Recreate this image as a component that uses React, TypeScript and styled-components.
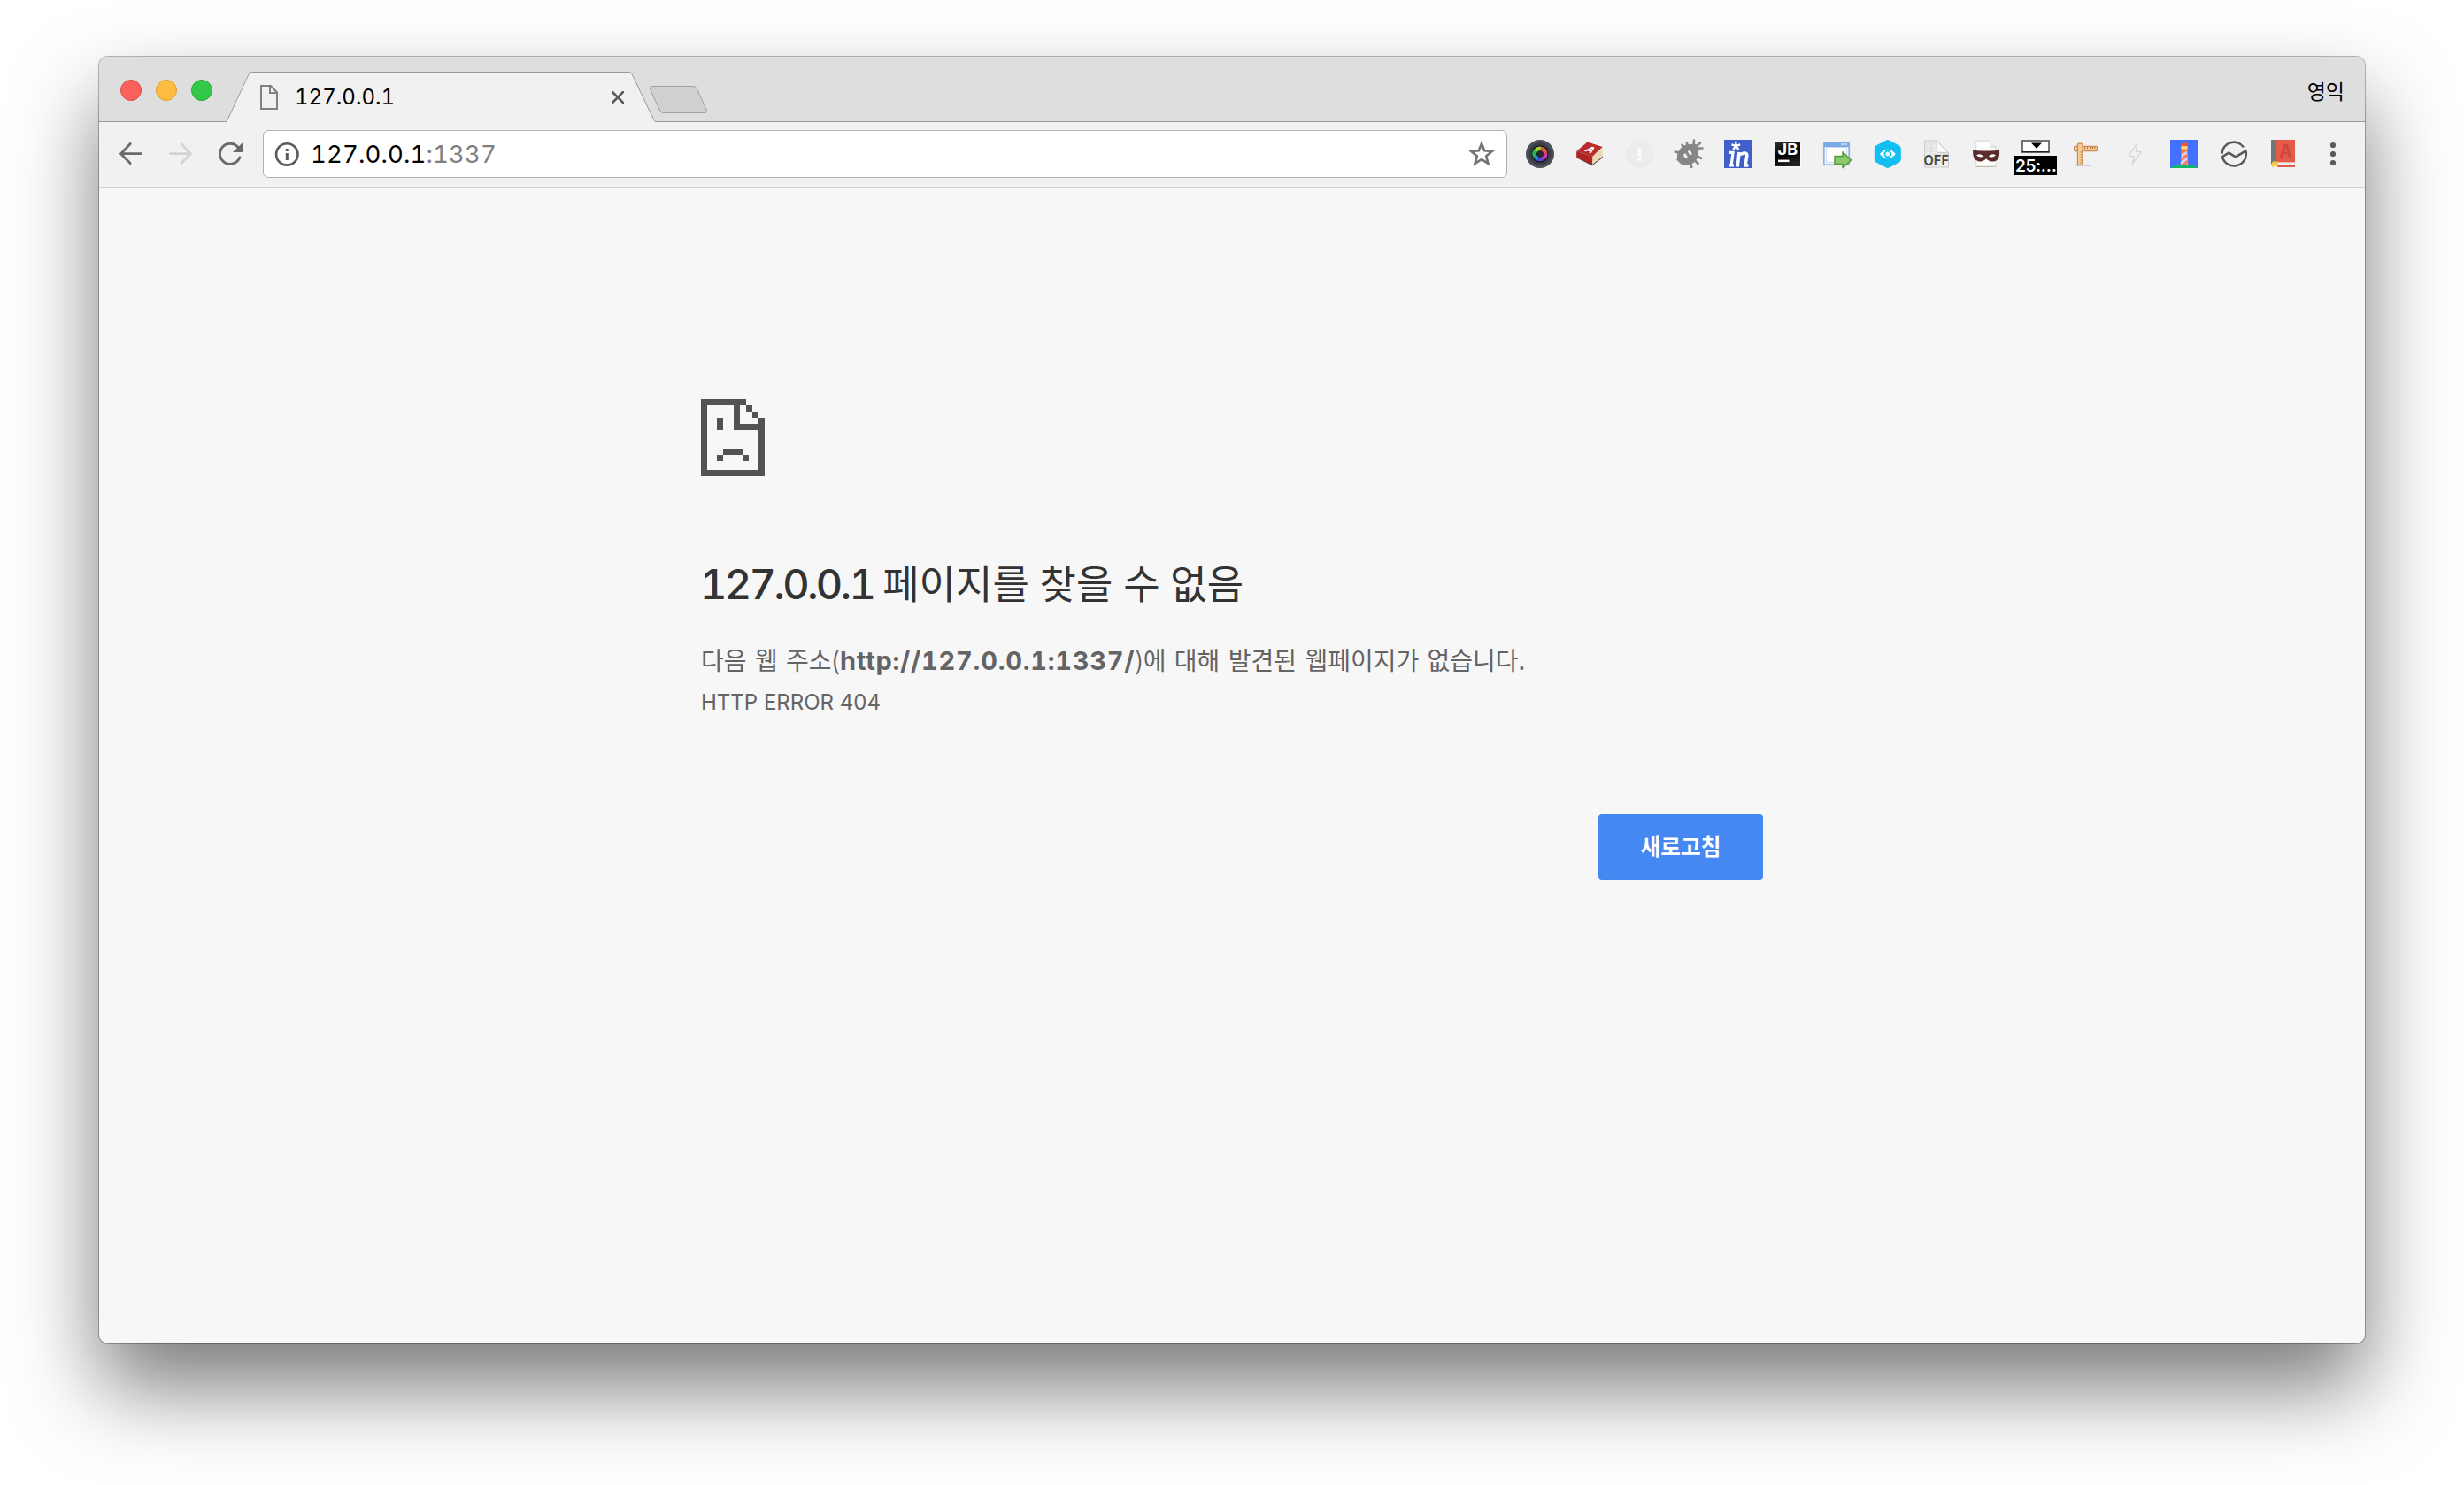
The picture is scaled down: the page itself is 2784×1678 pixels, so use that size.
import React from "react";
import styled, { createGlobalStyle } from "styled-components";

const LATIN = `Inter, "Noto Sans CJK KR", sans-serif`;
const KOREAN = `"Noto Sans CJK KR", Inter, sans-serif`;

const GlobalStyle = createGlobalStyle`
  body { margin: 0; background: #fff; font-family: ${LATIN}; }
  *, *::before, *::after { box-sizing: border-box; }
`;

const Desktop = styled.div`
  width: 2784px;
  height: 1678px;
  padding: 64px 112px 0;
  overflow: hidden;
  background: #fff;
`;

const BrowserWindow = styled.div`
  display: flex;
  flex-direction: column;
  height: 1454px;
  border-radius: 10px;
  background: #f7f7f7;
  box-shadow: 0 0 0 1px rgba(0, 0, 0, 0.27), 0 50px 96px rgba(0, 0, 0, 0.52);
`;

const TabStrip = styled.header`
  display: flex;
  height: 74px;
  padding: 17px 23px 0 24px;
  border-bottom: 1px solid #999;
  border-radius: 10px 10px 0 0;
  background: #dedede;
`;

const TrafficLights = styled.div`
  display: flex;
  gap: 16px;
  margin-top: 9px;
  width: 119px;
`;

const Light = styled.span<{ $fill: string; $edge: string }>`
  width: 24px;
  height: 24px;
  border-radius: 50%;
  border: 1px solid ${(p) => p.$edge};
  background: ${(p) => p.$fill};
`;

const Tab = styled.div`
  position: relative;
  display: flex;
  align-items: center;
  width: 486px;
  height: 57px;
  padding: 0 36px 0 39px;
`;

const TabShape = styled.svg`
  position: absolute;
  inset: 0;
`;

const TabIcon = styled.svg`
  position: relative;
  width: 20px;
  height: 28px;
`;

const TabTitle = styled.span`
  position: relative;
  flex: 1;
  margin-left: 19px;
  font-size: 24px;
  font-variant-numeric: tabular-nums;
  line-height: 30px;
  letter-spacing: 0.05px;
  color: #000;
`;

const CloseIcon = styled.svg`
  position: relative;
  width: 14px;
  height: 14px;
`;

const NewTab = styled.svg`
  width: 68px;
  height: 33px;
  margin: 15px 0 0 -8px;
`;

const Profile = styled.span`
  margin: 3px 0 0 auto;
  font-family: ${KOREAN};
  font-size: 23px;
  line-height: 36px;
  color: #000;
`;

const Toolbar = styled.nav`
  display: flex;
  align-items: center;
  height: 74px;
  padding: 9px 20px 10px;
  border-bottom: 1px solid #d2d2d2;
  background: #f1f1f1;
`;

const NavButtons = styled.div`
  display: flex;
  gap: 24px;
`;

const Icon = styled.svg`
  display: block;
  width: 32px;
  height: 32px;
  flex: none;
  overflow: visible;
`;

const Omnibox = styled.div`
  display: flex;
  align-items: center;
  width: 1406px;
  height: 54px;
  margin: 0 21px;
  padding: 0 12px 0 10px;
  border: 1px solid #b1b1b1;
  border-radius: 6px;
  background: #fff;
`;

const Address = styled.span`
  flex: 1;
  margin-left: 11px;
  font-size: 27.5px;
  font-variant-numeric: tabular-nums;
  line-height: 36px;
  letter-spacing: 0.15px;
  color: #000;
`;

const Port = styled.span`
  color: #808080;
`;

const Extensions = styled.div`
  display: flex;
  gap: 24px;
`;

const TimerSlot = styled.div`
  position: relative;
`;

const TimerBadge = styled.span`
  position: absolute;
  left: -8px;
  top: 18px;
  width: 48px;
  height: 22px;
  padding-left: 1px;
  background: #000;
  color: #fff;
  font-size: 19px;
  font-weight: 600;
  line-height: 23px;
  letter-spacing: -0.4px;
  white-space: nowrap;
`;

const Page = styled.main`
  display: flex;
  flex-direction: column;
  width: 1200px;
  margin: 0 auto;
  padding-top: 239px;
`;

const SadPage = styled.svg`
  width: 72px;
  height: 87px;
`;

const Heading = styled.h1`
  margin: 92px 0 0 -1px;
  height: 60px;
  font-size: 47px;
  font-variant-numeric: tabular-nums;
  font-weight: 500;
  line-height: 60px;
  letter-spacing: -2.7px;
  color: #333;
  white-space: nowrap;
`;

const HeadingKorean = styled.span`
  font-family: ${KOREAN};
  font-size: 45px;
  font-weight: 400;
  letter-spacing: 0;
  word-spacing: 1.7px;
  line-height: 1;
`;

const Summary = styled.p`
  margin: 32px 0 0;
  height: 46px;
  font-family: ${KOREAN};
  font-size: 28px;
  line-height: 46px;
  word-spacing: 3.1px;
  color: #646464;
  white-space: nowrap;
`;

const Url = styled.strong`
  font-family: ${LATIN};
  font-size: 29px;
  font-variant-numeric: tabular-nums;
  font-weight: 700;
  letter-spacing: 0.75px;
  line-height: 1;
`;

const ErrorCode = styled.div`
  margin-top: 8px;
  font-size: 24px;
  line-height: 36px;
  color: #646464;
`;

const ReloadButton = styled.button`
  align-self: flex-end;
  width: 186px;
  height: 74px;
  margin-top: 108px;
  padding: 0 0 5px;
  border: 0;
  border-radius: 4px;
  background: #4688f1;
  color: #fff;
  font-family: ${KOREAN};
  font-size: 24.7px;
  font-weight: 700;
`;

const LensIcon = () => (
  <Icon viewBox="0 0 32 32">
    <circle cx="16" cy="16" r="16" fill="#4b5058" />
    <circle cx="16" cy="16" r="12.5" fill="#3a3d43" />
    <circle cx="16" cy="16" r="9.5" fill="#08080c" />
    <g fill="none" strokeWidth="4.8">
      <path d="M10.6 19 A6 6 0 0 1 11.5 11.8" stroke="#2fae5c" />
      <path d="M11.5 11.8 A6 6 0 0 1 17.2 10" stroke="#a5cf3a" />
      <path d="M17.2 10 A6 6 0 0 1 22 15" stroke="#e0563a" />
      <path d="M22 15 A6 6 0 0 1 19 21.2" stroke="#d32fae" />
      <path d="M19 21.2 A6 6 0 0 1 13.5 21.4" stroke="#5b47e0" />
      <path d="M13.5 21.4 A6 6 0 0 1 10.6 19" stroke="#1f8fd0" />
    </g>
    <circle cx="16.5" cy="16" r="3.4" fill="#26282c" />
  </Icon>
);

const RedDictionaryIcon = () => (
  <Icon viewBox="0 0 32 32">
    <path d="M1.5 20.5 L19 29.2 L31 20 L31 18 L19.5 27 Z" fill="#444" />
    <path d="M13.5 2.5 L30.7 8 L19.6 18.8 L1.2 13 Z" fill="#bb2a2a" />
    <path d="M1.2 13 L19.6 18.8 L19.2 28 L1.2 20.2 Z" fill="#ad2223" />
    <path d="M19.6 18.8 L30.7 8 L30.7 19 L19.2 28 Z" fill="#ead9b6" />
    <text
      transform="matrix(0.85 0.3 -0.75 0.62 9.6 12.4)"
      fontFamily="Inter, sans-serif"
      fontWeight="800"
      fontSize="12.5"
      fill="#fff"
    >
      A
    </text>
  </Icon>
);

const StopIcon = () => (
  <Icon viewBox="0 0 32 32">
    <path
      d="M10.5 1.8 H22 L31 10.5 V21.5 L22 30.5 H10.5 L2 21.5 V10.5 Z"
      fill="#ececec"
      stroke="#e8e8e8"
      strokeLinejoin="round"
    />
    <rect x="14.2" y="9.5" width="4.4" height="9" rx="1" fill="#fbfbfb" />
    <rect x="14.2" y="20" width="4.4" height="3.6" rx="1" fill="#fbfbfb" />
  </Icon>
);

const BugIcon = () => (
  <Icon viewBox="0 0 32 32">
    <path
      d="M14 3.5 L14.5 8 M22 0.5 L21.5 8 M31.5 9.5 H25 M0.8 13.5 L6.5 15 M8.5 5.5 L11 9.5 M30 20.8 L25 18.5 M26.6 27 L22 22.5 M19.3 31 L18 25 M3.6 22.5 L7 21 M29 3.5 L24 8"
      stroke="#868686"
      strokeWidth="2.6"
      strokeLinecap="round"
      fill="none"
    />
    <ellipse cx="15" cy="17" rx="13" ry="11" transform="rotate(-45 15 17)" fill="#868686" />
    <circle cx="21.5" cy="10.5" r="6" fill="#868686" />
    <path d="M11.8 17.2 L13 19.2 M16.8 13.4 L18 15.6" stroke="#f1f1f1" strokeWidth="3.2" strokeLinecap="round" />
  </Icon>
);

const StarInIcon = () => (
  <Icon viewBox="0 0 32 32">
    <rect width="32" height="32" fill="#4060c9" />
    <path
      d="M13.3 6.8 V1.8 M13.3 6.8 L18.2 5.4 M13.3 6.8 L16.4 11 M13.3 6.8 L10.2 11 M13.3 6.8 L8.4 5.4"
      stroke="#fff"
      strokeWidth="2.3"
    />
    <path d="M6 14.4 H10 L8.2 28.4 M5 29 H11" stroke="#fff" strokeWidth="3.2" fill="none" />
    <path
      d="M15.2 30.5 L17 14 M17 17 Q26 12.6 25.8 18 L24 29 H27.5"
      stroke="#fff"
      strokeWidth="3.5"
      fill="none"
    />
  </Icon>
);

const JetBrainsIcon = () => (
  <Icon viewBox="0 0 32 32">
    <defs>
      <linearGradient id="jb" x1="0" y1="0" x2="0.3" y2="1">
        <stop offset="0" stopColor="#333" />
        <stop offset="0.6" stopColor="#000" />
        <stop offset="1" stopColor="#222" />
      </linearGradient>
    </defs>
    <rect x="1" y="1" width="30" height="30" fill="#fafafa" />
    <rect x="2" y="2" width="28" height="28" fill="url(#jb)" />
    <text
      x="4.6"
      y="17.4"
      fontFamily="Inter, sans-serif"
      fontWeight="700"
      fontSize="17"
      fill="#fff"
      textLength="22.5"
      lengthAdjust="spacingAndGlyphs"
    >
      JB
    </text>
    <rect x="5" y="22.6" width="12.5" height="2.5" fill="#fff" />
  </Icon>
);

const WindowArrowIcon = () => (
  <Icon viewBox="0 0 32 32">
    <rect x="0.8" y="2.8" width="28.4" height="25.4" rx="1.6" fill="#fdfdff" stroke="#8fb2e3" strokeWidth="1.8" />
    <rect x="1" y="3" width="28" height="5" fill="#7babe6" />
    <rect x="20" y="4" width="7" height="2.2" fill="#b9d2f3" />
    <rect x="3.4" y="8.5" width="23.2" height="17" fill="#fff" stroke="#c7d8f1" />
    <path
      d="M13 18.6 H22 V13.8 L31.5 23 L22 31.6 V27.4 H13 Z"
      fill="#8bc96c"
      stroke="#4f9c33"
      strokeWidth="1.5"
      strokeLinejoin="round"
    />
  </Icon>
);

const HexEyeIcon = () => (
  <Icon viewBox="0 0 32 32">
    <path
      d="M14.6 0.8 Q16.8 -0.6 19 0.8 L30 6.4 Q31.8 7.6 31.8 10 V22 Q31.8 24.4 30 25.6 L19 31.2 Q16.8 32.6 14.6 31.2 L3.6 25.6 Q1.8 24.4 1.8 22 V10 Q1.8 7.6 3.6 6.4 Z"
      fill="#12bff0"
    />
    <path d="M7.8 16 Q16.8 5.6 25.8 16 Q16.8 26.4 7.8 16 Z" fill="#fff" />
    <circle cx="16.8" cy="16" r="4.4" fill="#12bff0" />
    <circle cx="16.8" cy="16" r="2.5" fill="#d9f5fd" />
  </Icon>
);

const OffPageIcon = () => (
  <Icon viewBox="0 0 32 32">
    <path d="M2.5 1 H16 L29.5 15 V31 H2.5 Z" fill="#ececec" stroke="#c9c9c9" />
    <path d="M4 5 H14 M4 9 H14 M4 13 H20 M12 16.5 H28" stroke="#dadada" strokeWidth="1.2" />
    <path d="M10 1.2 V31" stroke="#d8d8d8" />
    <path d="M16 1 L16.5 14 L29.5 15 Z" fill="#fafafa" stroke="#c4c4c4" />
    <text
      x="1.6"
      y="29.4"
      fontFamily="Inter, sans-serif"
      fontWeight="600"
      fontSize="16"
      fill="#444"
      textLength="28.5"
      lengthAdjust="spacingAndGlyphs"
    >
      OFF
    </text>
  </Icon>
);

const MaskIcon = () => (
  <Icon viewBox="0 0 32 32">
    <path d="M4.8 1.2 H20.5 L27 8 V30.4 H4.8 Z" fill="#fdfdfd" stroke="#d6d6d6" />
    <path d="M20.5 1.2 V8 H27" fill="#eee" stroke="#ccc" />
    <path d="M4.8 30.4 H27" stroke="#b5c5a4" strokeWidth="1.2" />
    <path
      d="M1 11.6 Q8 13 16 12.4 Q24 13 31 11.6 Q32.2 24 24 24.6 Q19 24.6 16.2 21.2 Q13 24.6 8 24.6 Q0.6 24 1 11.6 Z"
      fill="#5b2c2e"
    />
    <path d="M5 17.6 Q9.6 14.4 13.4 18.8 Q8.6 20.6 5 17.6 Z M27 17.6 Q22.6 14.4 18.8 18.8 Q23.6 20.6 27 17.6 Z" fill="#fff" />
  </Icon>
);

const TimerIcon = () => (
  <TimerSlot>
    <Icon viewBox="0 0 32 32">
      <rect x="1" y="1" width="30" height="13" fill="#fff" stroke="#666" strokeWidth="1.8" />
      <path d="M0.5 13.6 H31.5" stroke="#222" strokeWidth="1.2" />
      <path d="M11 3.5 H23 L17 9.8 Z" fill="#000" />
    </Icon>
    <TimerBadge>25:…</TimerBadge>
  </TimerSlot>
);

const RulerIcon = () => (
  <Icon viewBox="0 0 32 32">
    <path d="M4 29.2 H22" stroke="#cfcfcf" strokeWidth="1.8" />
    <rect x="3.6" y="7.4" width="26" height="5.2" rx="1" fill="#f5cb9b" stroke="#cf8c50" strokeWidth="1.2" />
    <rect x="7.4" y="4.2" width="5.6" height="24.2" rx="1" fill="#f5cb9b" stroke="#cf8c50" strokeWidth="1.2" />
    <path
      d="M15.5 8 V10 M18.5 8 V10 M21.5 8 V10 M24.5 8 V10 M27 8 V10 M10.6 14 H12.6 M10.6 17 H12.6 M10.6 20 H12.6 M10.6 23 H12.6 M10.6 26 H12.6"
      stroke="#a8662c"
      strokeWidth="0.9"
    />
  </Icon>
);

const BoltIcon = () => (
  <Icon viewBox="0 0 32 32">
    <path
      d="M18.4 4.4 L9.2 18 L15 18.6 L13.4 27.4 L23.2 13.6 L17.4 13 Z"
      fill="none"
      stroke="#d5d5d5"
      strokeWidth="1.3"
      strokeLinejoin="round"
    />
  </Icon>
);

const LighthouseIcon = () => (
  <Icon viewBox="0 0 32 32">
    <rect width="32" height="32" fill="#4470ff" />
    <path d="M12.9 12 H19.1 L20.4 29.4 H11.6 Z" fill="#d0d3f2" />
    <path
      d="M12.9 12 H19.1 V12.6 L12.6 16.4 Z M12.3 20.6 L19.3 15.4 L19.7 19 L12 24.4 Z M11.7 28.6 L19.9 22.4 L20.2 26.4 L16 29.4 H11.6 Z"
      fill="#ff7a52"
    />
    <path d="M12 8 Q12 3.2 16 3.2 Q20 3.2 20 8 Z" fill="#ff5522" />
    <rect x="12.4" y="7.2" width="7.2" height="4" fill="#ffdc73" />
    <rect x="11.6" y="10.6" width="8.8" height="2" fill="#ff6a2a" />
    <path d="M0 32 Q3 28.6 16 28.6 Q29 28.6 32 32 Z" fill="#12b869" />
  </Icon>
);

const CircleWaveIcon = () => (
  <Icon viewBox="0 0 32 32">
    <g fill="none" stroke="#585858" strokeWidth="2.5" strokeLinejoin="round">
      <path d="M2.6 15.6 A13.4 13.4 0 0 1 27 8.4" />
      <path d="M2.9 19.2 L10.2 14.6 L18 19.4 L29.4 12.4 A13.4 13.4 0 0 1 2.9 19.2 Z" />
    </g>
  </Icon>
);

const DictionaryIcon = () => (
  <Icon viewBox="0 0 32 32">
    <rect x="2" y="0" width="7" height="28" fill="#6f7878" />
    <path d="M2 27 L9 25 H29 V31 H6 Z" fill="#ececec" />
    <path d="M9 30 H29" stroke="#dd4b3e" strokeWidth="1.8" />
    <rect x="8" y="0" width="21" height="25.4" fill="#e65a48" />
    <text x="11" y="20" fontFamily="Inter, sans-serif" fontWeight="700" fontSize="20" fill="#c94b3e">
      A
    </text>
    <path d="M3.4 24.6 H9.6 V31 L6.6 28.8 L3.4 31.6 Z" fill="#f8c93c" />
  </Icon>
);

const MenuIcon = () => (
  <Icon viewBox="0 0 32 32" fill="#5a5a5a">
    <circle cx="16" cy="6" r="3.1" />
    <circle cx="16" cy="16" r="3.1" />
    <circle cx="16" cy="26" r="3.1" />
  </Icon>
);

export default function App() {
  return (
    <>
      <GlobalStyle />
      <Desktop>
        <BrowserWindow>
          <TabStrip>
            <TrafficLights>
              <Light $fill="#fc605c" $edge="#e04845" />
              <Light $fill="#fdbc40" $edge="#dea034" />
              <Light $fill="#34c84a" $edge="#27aa35" />
            </TrafficLights>
            <Tab>
              <TabShape width="486" height="57" viewBox="0 0 486 57">
                <path d="M0 57 L1.5 55 L25.5 3.2 Q27 0.5 29.5 0.5 H456 Q458 0.5 459.3 3.2 L484 55 L486 57 Z" fill="#f1f1f1" />
                <path
                  d="M0 56.5 Q1.2 56.2 1.9 54.8 L26 3.2 Q27 0.5 29.5 0.5 H456 Q458 0.5 459.3 3.2 L483.8 54.8 Q484.6 56.4 486 56.5"
                  fill="none"
                  stroke="#999"
                />
              </TabShape>
              <TabIcon viewBox="0 0 20 28">
                <path d="M1 1 H12 L19 8.5 V27 H1 Z M11 1 V9 H19" fill="none" stroke="#808080" strokeWidth="2" />
              </TabIcon>
              <TabTitle>127.0.0.1</TabTitle>
              <CloseIcon viewBox="0 0 14 14">
                <path d="M1 1 L13 13 M13 1 L1 13" stroke="#5a5a5a" strokeWidth="2.6" strokeLinecap="round" />
              </CloseIcon>
            </Tab>
            <NewTab viewBox="0 0 68 33">
              <path
                d="M4 1.5 H50.5 Q53 1.5 54.3 4 L65.2 28 Q66.4 31.5 63.5 31.5 H17 Q13.8 31.5 12.5 29 L1.6 5 Q0.8 1.5 4 1.5 Z"
                fill="#d0d0d0"
                stroke="#a0a0a0"
              />
            </NewTab>
            <Profile>영익</Profile>
          </TabStrip>

          <Toolbar>
            <NavButtons>
              <Icon viewBox="0 0 32 32" fill="none" stroke="#6a6a6a" strokeWidth="2.8" strokeLinecap="round">
                <path d="M27.5 15.7 H5 M15.2 4.5 L4.6 15.7 L15.2 26.6" />
              </Icon>
              <Icon viewBox="0 0 32 32" fill="none" stroke="#d4d4d4" strokeWidth="2.8" strokeLinecap="round">
                <path d="M4.5 15.7 H27 M16.8 4.5 L27.4 15.7 L16.8 26.6" />
              </Icon>
              <Icon viewBox="0 0 32 32">
                <path
                  d="M24.6 8 A11.6 11.6 0 1 0 26.9 19.8"
                  fill="none"
                  stroke="#6a6a6a"
                  strokeWidth="2.9"
                  strokeLinecap="round"
                />
                <path d="M30 3.2 V14 H19 Z" fill="#6a6a6a" />
              </Icon>
            </NavButtons>
            <Omnibox>
              <Icon viewBox="0 0 32 32">
                <circle cx="16.3" cy="16.4" r="12.2" fill="none" stroke="#5a5a5a" strokeWidth="2.6" />
                <rect x="14.8" y="10" width="3" height="3" fill="#5a5a5a" />
                <rect x="14.8" y="15" width="3" height="8" fill="#5a5a5a" />
              </Icon>
              <Address>
                127.0.0.1<Port>:1337</Port>
              </Address>
              <Icon viewBox="0 0 32 32">
                <path
                  d="M16 4.4 L19.2 12.3 L27.8 12.9 L21.2 18.4 L23.4 26.8 L16 22.2 L8.6 26.8 L10.8 18.4 L4.2 12.9 L12.8 12.3 Z"
                  fill="none"
                  stroke="#757575"
                  strokeWidth="2.7"
                />
              </Icon>
            </Omnibox>
            <Extensions>
              <LensIcon />
              <RedDictionaryIcon />
              <StopIcon />
              <BugIcon />
              <StarInIcon />
              <JetBrainsIcon />
              <WindowArrowIcon />
              <HexEyeIcon />
              <OffPageIcon />
              <MaskIcon />
              <TimerIcon />
              <RulerIcon />
              <BoltIcon />
              <LighthouseIcon />
              <CircleWaveIcon />
              <DictionaryIcon />
              <MenuIcon />
            </Extensions>
          </Toolbar>

          <Page>
            <SadPage viewBox="0 0 72 87" fill="#535353" shapeRendering="crispEdges">
              <path d="M0 0 H51 V7 H44 V28 H65 V21 H72 V87 H0 Z M7 7 V80 H65 V35 H37 V7 Z" fillRule="evenodd" />
              <path d="M51 7 H58 V14 H51 Z M58 14 H65 V21 H58 Z M18 21 H25 V35 H18 Z M25 56 H47 V63 H25 Z M18 63 H25 V70 H18 Z M47 63 H54 V70 H47 Z" />
            </SadPage>
            <Heading>
              127.0.0.1 <HeadingKorean>페이지를 찾을 수 없음</HeadingKorean>
            </Heading>
            <Summary>
              다음 웹 주소(<Url>http://127.0.0.1:1337/</Url>)에 대해 발견된 웹페이지가 없습니다.
            </Summary>
            <ErrorCode>HTTP ERROR 404</ErrorCode>
            <ReloadButton>새로고침</ReloadButton>
          </Page>
        </BrowserWindow>
      </Desktop>
    </>
  );
}
